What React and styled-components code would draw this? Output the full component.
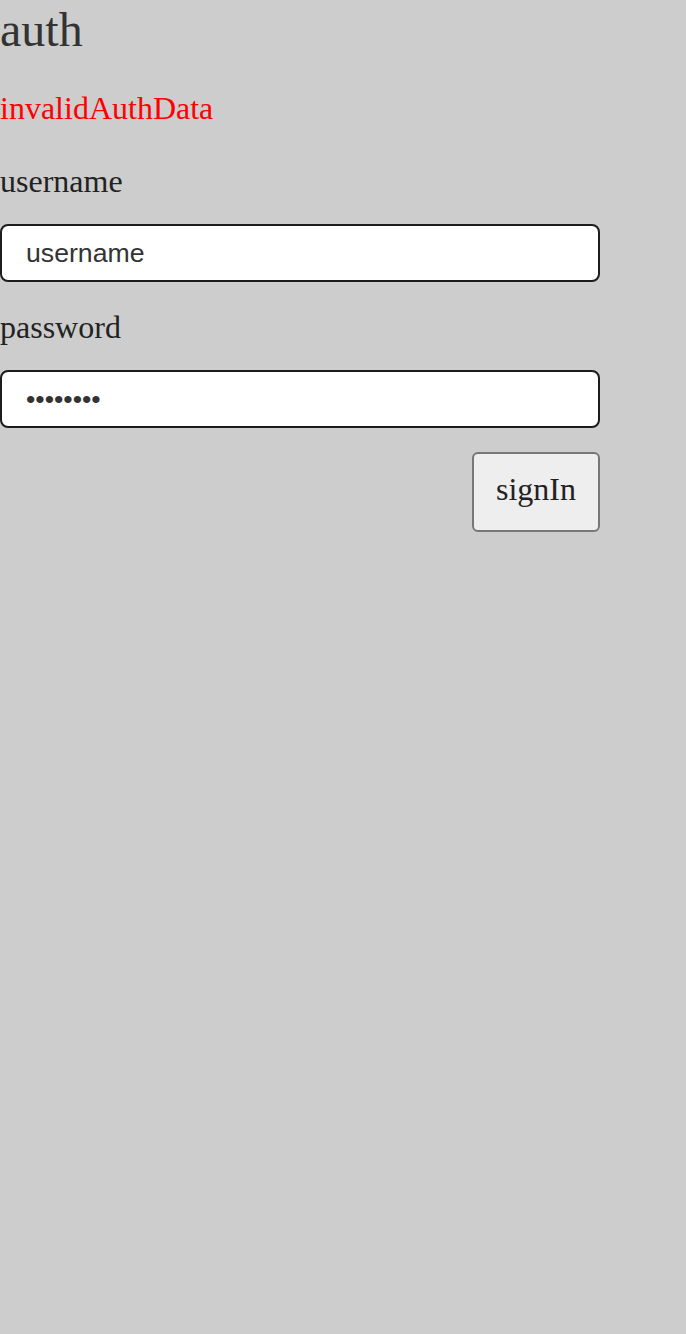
import { useState } from "react";
import styled, { createGlobalStyle } from "styled-components";

const GlobalStyle = createGlobalStyle`
  html, body {
    margin: 0;
    padding: 0;
    background: #cdcdcd;
  }
  body {
    font-family: "Liberation Serif", "Times New Roman", serif;
    color: #222;
  }
`;

const App = () => {
  const [username, setUsername] = useState("username");
  const [password, setPassword] = useState("12345678");

  return (
    <>
      <GlobalStyle />
      <Page>
        <Title>auth</Title>
        <ErrorText>invalidAuthData</ErrorText>
        <Form onSubmit={(e) => e.preventDefault()}>
          <Field>
            <Label htmlFor="username">username</Label>
            <Input
              id="username"
              value={username}
              onChange={(e) => setUsername(e.target.value)}
            />
          </Field>
          <Field $top={25}>
            <Label htmlFor="password">password</Label>
            <Input
              id="password"
              type="password"
              value={password}
              onChange={(e) => setPassword(e.target.value)}
            />
          </Field>
          <SubmitButton type="submit">signIn</SubmitButton>
        </Form>
      </Page>
    </>
  );
};

const Page = styled.main`
  display: flex;
  flex-direction: column;
  width: 600px;
`;

const Title = styled.h1`
  margin: 0;
  font-size: 48px;
  line-height: 60px;
  font-weight: 400;
  color: #333;
`;

const ErrorText = styled.p`
  margin: 28px 0 0;
  font-size: 32px;
  line-height: 40px;
  color: #ff0000;
`;

const Form = styled.form`
  display: flex;
  flex-direction: column;
  margin-top: 33px;
`;

const Field = styled.div`
  display: flex;
  flex-direction: column;
  gap: 23px;
  margin-top: ${({ $top }) => ($top ? `${$top}px` : "0")};
`;

const Label = styled.label`
  font-size: 32px;
  line-height: 40px;
  color: #222;
`;

const Input = styled.input`
  box-sizing: border-box;
  width: 600px;
  height: 58px;
  margin: 0;
  padding: 0 24px;
  border: 2px solid #1c1c1c;
  border-radius: 8px;
  background: #fff;
  font-family: "Liberation Sans", Arial, sans-serif;
  font-size: 26.67px;
  color: #333;
  outline: none;
`;

const SubmitButton = styled.button`
  align-self: flex-end;
  box-sizing: border-box;
  height: 80px;
  margin-top: 24px;
  padding: 0 22px 6px;
  border: 2px solid #777;
  border-radius: 6px;
  background: #eeeeee;
  font-family: "Liberation Serif", "Times New Roman", serif;
  font-size: 32px;
  color: #222;
  cursor: pointer;
`;

export default App;
